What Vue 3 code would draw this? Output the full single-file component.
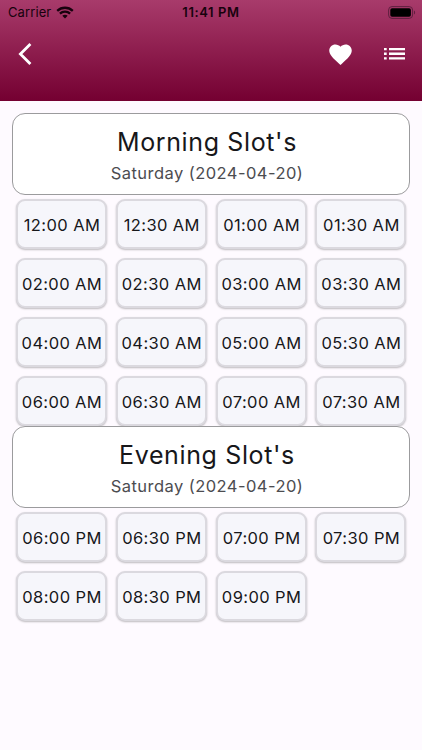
<script setup>
const sections = [
  {
    name: 'morning',
    title: "Morning Slot's",
    date: 'Saturday (2024-04-20)',
    slots: [
      '12:00 AM', '12:30 AM', '01:00 AM', '01:30 AM',
      '02:00 AM', '02:30 AM', '03:00 AM', '03:30 AM',
      '04:00 AM', '04:30 AM', '05:00 AM', '05:30 AM',
      '06:00 AM', '06:30 AM', '07:00 AM', '07:30 AM'
    ]
  },
  {
    name: 'evening',
    title: "Evening Slot's",
    date: 'Saturday (2024-04-20)',
    slots: ['06:00 PM', '06:30 PM', '07:00 PM', '07:30 PM', '08:00 PM', '08:30 PM', '09:00 PM']
  }
]
</script>

<template>
  <div class="screen">
    <header class="header">
      <div class="status">
        <div class="carrier">
          <span>Carrier</span>
          <svg width="18" height="13" viewBox="0 0 18 13" fill="none" stroke="#17020d" stroke-width="2.3">
            <path d="M1.2 4.8C5.6 .7 12.4 .7 16.8 4.8" />
            <path d="M3.9 7.7C6.8 5 11.2 5 14.1 7.7" />
            <path d="M9 12.4L6.3 9.7C7.8 8.3 10.2 8.3 11.7 9.7Z" fill="#17020d" stroke="none" />
          </svg>
        </div>
        <span class="clock">11:41 PM</span>
        <div class="battery">
          <svg width="28" height="13" viewBox="0 0 28 13">
            <rect x=".6" y=".6" width="24" height="11.8" rx="3.4" fill="none" stroke="#5f1f3f" />
            <rect x="2.3" y="2.3" width="20.6" height="8.4" rx="1.8" fill="#000" />
            <path d="M26 4.5c1.5.5 1.5 3.5 0 4z" fill="#5f1f3f" />
          </svg>
        </div>
      </div>
      <nav class="nav">
        <button class="icon back" aria-label="Back">
          <svg width="14" height="24" viewBox="0 0 14 24" fill="none" stroke="#fff" stroke-width="2.8">
            <path d="M12.4 2L2.4 12L12.4 22" />
          </svg>
        </button>
        <div class="actions">
          <button class="icon" aria-label="Favourites">
            <svg width="27" height="27" viewBox="0 0 24 24" fill="#fff">
              <path d="M12 21.35l-1.45-1.32C5.4 15.36 2 12.28 2 8.5 2 5.42 4.42 3 7.5 3c1.74 0 3.41.81 4.5 2.09C13.09 3.81 14.76 3 16.5 3 19.58 3 22 5.42 22 8.5c0 3.78-3.4 6.86-8.55 11.54L12 21.35z" />
            </svg>
          </button>
          <button class="icon" aria-label="List">
            <svg width="22" height="14" viewBox="0 0 22 14" fill="#fff">
              <path d="M0 .9h2.7v2.3H0zM0 5.6h2.7v2.3H0zM0 10.3h2.7v2.3H0zM5 .9h16v2.3H5zM5 5.6h16v2.3H5zM5 10.3h16v2.3H5z" />
            </svg>
          </button>
        </div>
      </nav>
    </header>

    <main class="content">
      <section v-for="section in sections" :key="section.name">
        <div class="card">
          <h2>{{ section.title }}</h2>
          <p>{{ section.date }}</p>
        </div>
        <div class="slots" :class="section.name">
          <button v-for="slot in section.slots" :key="slot" class="slot">{{ slot }}</button>
        </div>
      </section>
    </main>
  </div>
</template>

<style>
body {
  margin: 0;
  background: #fefaff;
}
</style>

<style scoped>
.screen {
  width: 422px;
  height: 750px;
  overflow: hidden;
  background: #fefaff;
  font-family: Inter, 'Liberation Sans', sans-serif;
}
button {
  padding: 0;
  border: 0;
  font-family: inherit;
}
svg {
  display: block;
}
.header {
  height: 101px;
  background: linear-gradient(#a83b6b, #740031);
}
.status {
  display: grid;
  grid-template-columns: 1fr auto 1fr;
  align-items: center;
  height: 24px;
  padding: 0 6px 0 8px;
  color: #17020d;
}
.carrier {
  display: flex;
  align-items: center;
  gap: 5px;
  font-size: 13px;
  letter-spacing: 0.1px;
}
.clock {
  padding-right: 2px;
  font-size: 13px;
  font-weight: 600;
  letter-spacing: 0.6px;
}
.battery {
  display: flex;
  justify-content: flex-end;
}
.nav {
  display: flex;
  justify-content: space-between;
  align-items: center;
  height: 60px;
  padding: 0 16px 0 18px;
}
.icon {
  background: none;
}
.actions {
  display: flex;
  align-items: center;
  gap: 30px;
}
.content {
  padding: 12px 12px 0;
}
.card {
  box-sizing: border-box;
  height: 82px;
  padding: 13px 8px 0 0;
  border: 1px solid #9b9b9d;
  border-radius: 13px;
  background: #fff;
  text-align: center;
}
.card h2 {
  margin: 0;
  color: #17171a;
  font-size: 25px;
  font-weight: 400;
  line-height: 30px;
  letter-spacing: 0.63px;
}
.card p {
  margin: 5px 0 0;
  color: #4c4c50;
  font-size: 16.5px;
  line-height: 22px;
  letter-spacing: 0.45px;
}
.slots {
  display: grid;
  grid-template-columns: repeat(4, 91px);
  grid-auto-rows: 50px;
  column-gap: 8.8px;
  row-gap: 9px;
  padding: 4px 4px 0;
}
.morning {
  box-sizing: border-box;
  height: 231px;
  overflow: hidden;
}
.slot {
  padding: 2px 0 0 1px;
  border: 2px solid #dbd9df;
  border-radius: 9px;
  background: #f6f6fb;
  box-shadow: 0 1px 2px rgba(0, 0, 0, 0.26);
  color: #17171a;
  font-size: 16.5px;
  letter-spacing: 0.4px;
  white-space: nowrap;
}
</style>
